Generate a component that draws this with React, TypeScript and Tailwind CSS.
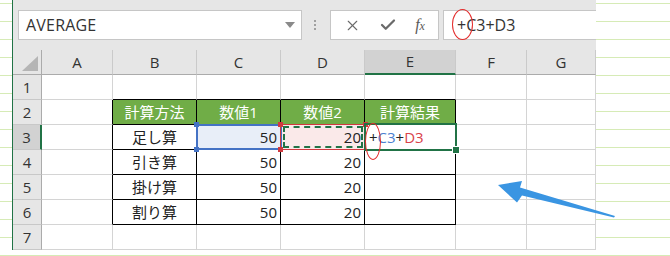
import { X, Check } from 'lucide-react';

const colLetters = ['A', 'B', 'C', 'D', 'E', 'F', 'G'];

const rowsData: Record<number, string[]> = {
  2: ['', '計算方法', '数値1', '数値2', '計算結果', '', ''],
  3: ['', '足し算', '50', '20', '', '', ''],
  4: ['', '引き算', '50', '20', '', '', ''],
  5: ['', '掛け算', '50', '20', '', '', ''],
  6: ['', '割り算', '50', '20', '', '', ''],
};

function LinedStrip() {
  return null;
}

function DataCell({ r, c, text }: { r: number; c: number; text: string }) {
  const inTable = r >= 2 && r <= 6 && c >= 2 && c <= 5;
  const rightBlack = inTable || (c === 1 && r >= 2 && r <= 6);
  const bottomBlack = inTable || (r === 1 && c >= 2 && c <= 5);

  let bg = 'bg-white';
  if (inTable && r === 2) bg = 'bg-[#70ad47] text-white';
  else if (r === 3 && c === 3) bg = 'bg-[#e8eef8]';
  else if (r === 3 && c === 4) bg = 'bg-[#fae9e9]';

  let align = 'justify-center';
  if ((c === 3 || c === 4) && r >= 3) align = 'justify-end pr-[3px]';
  if (c === 5 && r >= 3) align = 'justify-start pl-[3px]';

  return (
    <div
      className={`h-[25px] flex items-center border-r border-b text-[15px] text-[#222] ${align} ${bg} ${
        rightBlack ? 'border-r-black' : 'border-r-[#d4d4d4]'
      } ${bottomBlack ? 'border-b-black' : 'border-b-[#d4d4d4]'}`}
    >
      {r === 3 && c === 5 ? (
        <span className="pl-[1px]">
          <span className="text-[#222]">+</span>
          <span className="text-[#4a7fd0]">C3</span>
          <span className="text-[#222]">+</span>
          <span className="text-[#d9424a]">D3</span>
        </span>
      ) : (
        text
      )}
    </div>
  );
}

export default function App() {
  void LinedStrip;
  return (
    <div className="relative w-[670px] h-[256px] overflow-hidden bg-white bg-[linear-gradient(to_bottom,#d6ebb6_1px,transparent_1px)] bg-[length:100%_18px] bg-[position:0_3px] font-['Open_Sans','Noto_Sans_CJK_JP',sans-serif]">
      <div className="flex items-start">
        <div className="w-[12px] shrink-0" />
        <div className="w-px h-[250px] bg-[#217346] shrink-0" />

        {/* Excel window */}
        <div className="w-[583px] h-[250px] shrink-0 flex flex-col bg-[#e6e6e6] overflow-hidden">
          {/* toolbar */}
          <div className="relative h-[50px] flex items-start pt-[10px]">
            <div className="ml-[5px] w-[284px] h-[30px] bg-white border border-[#c6c6c6] flex items-center justify-between pl-[7px] pr-[6px]">
              <span className="text-[16px] text-[#333] tracking-[0.2px]">AVERAGE</span>
              <svg width="10" height="6" viewBox="0 0 10 6">
                <path d="M0 0 L10 0 L5 6 Z" fill="#8a8a8a" />
              </svg>
            </div>
            <div className="ml-[12px] h-[30px] flex flex-col items-center justify-center gap-[2px]">
              <div className="w-[2px] h-[2px] bg-[#a0a0a0]" />
              <div className="w-[2px] h-[2px] bg-[#a0a0a0]" />
              <div className="w-[2px] h-[2px] bg-[#a0a0a0]" />
            </div>
            <div className="ml-[14px] w-[109px] h-[30px] bg-white border border-[#c6c6c6] flex items-center justify-around px-[4px]">
              <X size={17} strokeWidth={1.6} color="#6a6a6a" />
              <Check size={18} strokeWidth={3} color="#6a6a6a" />
              <span className="font-['Liberation_Serif',serif] italic text-[16px] text-[#5a5a5a] leading-none">
                f<span className="text-[12px]">x</span>
              </span>
            </div>
            <div className="ml-[4px] flex-1 h-[30px] bg-white border border-r-0 border-[#c6c6c6] flex items-center pl-[13px]">
              <span className="text-[16px] text-[#333]">+C3+D3</span>
            </div>
            <div className="absolute left-[439px] top-[9px] w-[21px] h-[31px] rounded-[50%] border-[1.5px] border-[#e32b2b]" />
          </div>

          {/* grid */}
          <div className="relative grid grid-cols-[29px_71px_84px_84px_84px_91px_71px_69px]">
            {/* header row */}
            <div className="h-[25px] bg-[#e6e6e6] border-r border-b border-r-[#ababab] border-b-[#ababab] flex items-end justify-end p-[3px]">
              <svg width="16" height="15" viewBox="0 0 16 15">
                <path d="M16 0 L16 15 L0 15 Z" fill="#b5b5b5" />
              </svg>
            </div>
            {colLetters.map((l) => (
              <div
                key={l}
                className={`h-[25px] flex items-center justify-center text-[15px] text-[#333] border-r border-r-[#cacaca] ${
                  l === 'E' ? 'bg-[#d2d2d2] border-b-2 border-b-[#217346]' : 'bg-[#e6e6e6] border-b border-b-[#ababab]'
                }`}
              >
                {l}
              </div>
            ))}

            {[1, 2, 3, 4, 5, 6, 7].map((r) => (
              <div key={r} className="contents">
                <div
                  className={`h-[25px] flex items-center justify-center text-[15px] text-[#333] border-b border-b-[#c8c8c8] ${
                    r === 3 ? 'bg-[#d2d2d2] border-r-2 border-r-[#217346]' : 'bg-[#e6e6e6] border-r border-r-[#ababab]'
                  }`}
                >
                  {r}
                </div>
                {colLetters.map((_, i) => (
                  <DataCell key={i} r={r} c={i + 1} text={rowsData[r]?.[i] ?? ''} />
                ))}
              </div>
            ))}

            {/* C3 reference (blue) */}
            <div className="absolute left-[183px] top-[74px] w-[86px] h-[26px] border-2 border-[#4472c4]" />
            <div className="absolute left-[181px] top-[72px] w-[5px] h-[5px] bg-[#4472c4]" />
            <div className="absolute left-[181px] top-[97px] w-[5px] h-[5px] bg-[#4472c4]" />

            {/* D3 reference (red) + copy marquee */}
            <div className="absolute left-[267px] top-[74px] w-[86px] h-[26px] border border-[#d0393f]" />
            <div className="absolute left-[270px] top-[76px] w-[80px] h-[22px] border-2 border-dashed border-[#217346]" />
            <div className="absolute left-[265px] top-[72px] w-[5px] h-[5px] bg-[#d0393f]" />
            <div className="absolute left-[265px] top-[97px] w-[5px] h-[5px] bg-[#d0393f]" />
            <div className="absolute left-[350px] top-[72px] w-[5px] h-[5px] bg-[#d0393f]" />

            {/* E3 active cell */}
            <div className="absolute left-[351px] top-[73px] w-[93px] h-[28px] border-2 border-[#217346]" />
            <div className="absolute left-[440px] top-[97px] w-[6px] h-[6px] bg-[#217346] outline outline-1 outline-white" />

            {/* red ellipse on E3 */}
            <div className="absolute left-[352px] top-[73px] w-[16px] h-[37px] rounded-[50%] border-[1.5px] border-[#e32b2b]" />
          </div>
        </div>
      </div>

      {/* blue arrow */}
      <svg className="absolute left-0 top-0" width="670" height="256" viewBox="0 0 670 256">
        <path d="M498 185 L522 181 L520 187.5 L615 216 L614 217.5 L522 195.5 L517 202.5 Z" fill="#3a95e2" />
      </svg>
    </div>
  );
}
